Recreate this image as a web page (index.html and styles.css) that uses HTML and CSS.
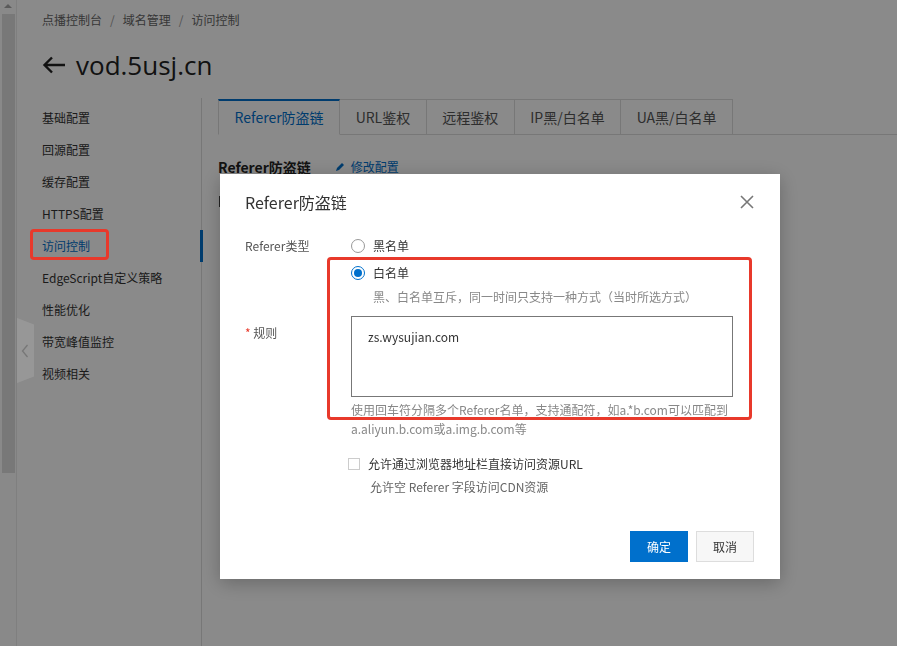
FILE: index.html
```html
<!DOCTYPE html>
<html lang="zh-CN">
<head>
<meta charset="utf-8">
<title>访问控制</title>
<link rel="stylesheet" href="styles.css">
</head>
<body>
<div class="app">
  <div class="scrollbar"><div class="sb-arrow"></div><div class="sb-thumb"></div></div>
  <div class="page">
    <div class="breadcrumb"><span>点播控制台</span><span class="sep">/</span><span>域名管理</span><span class="sep">/</span><span>访问控制</span></div>
    <div class="title">
      <svg class="back" width="24" height="18" viewBox="0 0 24 18"><path d="M23 9H2.5M10 1.5L2.5 9l7.5 7.5" fill="none" stroke="#222" stroke-width="2.4"/></svg>
      <span>vod.5usj.cn</span>
    </div>
    <div class="layout">
      <nav class="sidenav">
        <div class="nav-item">基础配置</div>
        <div class="nav-item">回源配置</div>
        <div class="nav-item">缓存配置</div>
        <div class="nav-item">HTTPS配置</div>
        <div class="nav-item active">访问控制<span class="mark-box"></span></div>
        <div class="nav-item">EdgeScript自定义策略</div>
        <div class="nav-item">性能优化</div>
        <div class="nav-item">带宽峰值监控</div>
        <div class="nav-item">视频相关</div>
      </nav>
      <main class="content">
        <div class="tabs">
          <div class="tab active">Referer防盗链</div>
          <div class="tab">URL鉴权</div>
          <div class="tab">远程鉴权</div>
          <div class="tab">IP黑/白名单</div>
          <div class="tab">UA黑/白名单</div>
        </div>
        <div class="section-head">
          <span class="section-title">Referer防盗链</span>
          <span class="edit"><svg width="10" height="10" viewBox="0 0 10 10"><path d="M1 9l1-3 5-5 2 2-5 5z" fill="#0070cc"/></svg>修改配置</span>
        </div>
        <div class="section-row"><span class="row-stub"></span></div>
      </main>
    </div>
    <div class="collapse-handle"><svg width="8" height="14" viewBox="0 0 8 14"><path d="M6.5 1L1.5 7l5 6" fill="none" stroke="#777" stroke-width="1.3"/></svg></div>
  </div>
</div>
<div class="mask"></div>
<div class="dialog">
  <div class="dialog-head">
    <span class="dialog-title">Referer防盗链</span>
    <svg class="close" width="14" height="14" viewBox="0 0 14 14"><path d="M1 1l12 12M13 1L1 13" stroke="#777" stroke-width="1.6" fill="none"/></svg>
  </div>
  <div class="form">
    <div class="form-row">
      <div class="label">Referer类型</div>
      <div class="control">
        <label class="radio"><span class="radio-dot"></span>黑名单</label>
        <label class="radio checked"><span class="radio-dot"></span>白名单</label>
        <div class="help radio-help">黑、白名单互斥，同一时间只支持一种方式（当时所选方式）</div>
      </div>
    </div>
    <div class="form-row rule-row">
      <div class="label"><span class="req">*</span> 规则</div>
      <div class="control">
        <div class="textarea">zs.wysujian.com</div>
        <div class="help">使用回车符分隔多个Referer名单，支持通配符，如a.*b.com可以匹配到<br>a.aliyun.b.com或a.img.b.com等</div>
      </div>
    </div>
    <div class="check-row">
      <label class="checkbox"><span class="box"></span>允许通过浏览器地址栏直接访问资源URL</label>
      <div class="check-sub">允许空 Referer 字段访问CDN资源</div>
    </div>
  </div>
  <div class="dialog-foot">
    <button class="btn primary">确定</button>
    <button class="btn">取消</button>
  </div>
  <span class="mark-box dialog-mark"></span>
</div>
</body>
</html>
```

FILE: styles.css
```css
* { box-sizing: border-box; margin: 0; padding: 0; }
html, body { height: 100%; }
body {
  font-family: "Noto Sans CJK SC", "Open Sans", sans-serif;
  font-size: 12px;
  line-height: 1.5;
  color: #333;
  background: #fff;
  overflow: hidden;
}
.app { display: flex; height: 646px; }

.scrollbar {
  width: 17px; flex: none; background: #fdfdfd; border-right: 1px solid #eaeaea;
  display: flex; flex-direction: column; align-items: center; padding-top: 4px;
}
.sb-arrow { width: 0; height: 0; border-left: 4px solid transparent; border-right: 4px solid transparent; border-bottom: 4px solid #a8a8a8; }
.sb-thumb { width: 13px; height: 459px; margin-top: 6px; background: #dedede; }

.page { flex: 1; position: relative; display: flex; flex-direction: column; }
.breadcrumb { padding: 12px 0 0 25px; line-height: 16px; height: 28px; color: #666; display: flex; }
.breadcrumb .sep { margin: 0 8px; color: #999; }
.title {
  display: flex; align-items: center; gap: 10px; padding-left: 25px; margin-top: 21px; height: 32px;
  font-family: "Open Sans", "Noto Sans CJK SC", sans-serif; font-size: 26px; color: #222;
}
.title .back { flex: none; }

.layout { display: flex; flex: 1; margin-top: 17px; }
.sidenav { width: 185px; flex: none; border-right: 1px solid #ddd; padding-top: 4px; }
.nav-item { position: relative; height: 32px; line-height: 32px; padding-left: 25px; color: #333; }
.nav-item.active { color: #0070cc; }
.nav-item.active::after { content: ""; position: absolute; right: -2px; top: 0; bottom: 0; width: 3px; background: #0070cc; }
.mark-box { position: absolute; z-index: 30; border: 3px solid #e8392b; border-radius: 4px; }
.nav-item .mark-box { left: 13px; top: -1px; width: 79px; height: 31px; }

.content { flex: 1; padding-left: 16px; padding-top: 1px; }
.tabs { display: flex; border-bottom: 1px solid #ddd; height: 36px; }
.tab { height: 36px; line-height: 34px; padding: 0 15.5px; border: 1px solid #ddd; border-left: none; font-size: 14px; color: #555; background: #fff; }
.tab:first-child { border-left: 1px solid #ddd; }
.tab.active { color: #0070cc; border-top: 2px solid #0070cc; border-bottom-color: #fff; line-height: 33px; }

.section-head { display: flex; align-items: center; margin-top: 22px; height: 20px; }
.section-title { font-size: 14px; font-weight: bold; color: #222; }
.edit { margin-left: 24px; color: #0070cc; display: flex; align-items: center; gap: 6px; }
.section-row { margin-top: 19px; display: flex; padding-left: 1px; }
.row-stub { width: 3px; height: 11px; background: #444; }

.collapse-handle {
  position: absolute; z-index: 30; left: 0; top: 318px; width: 17px; height: 65px;
  background: #979797; clip-path: polygon(0 0, 100% 10%, 100% 90%, 0 100%);
  display: flex; align-items: center; padding-left: 4px;
}

.mask { position: fixed; inset: 0; background: rgba(0, 0, 0, 0.46); z-index: 10; }

.dialog {
  position: fixed; z-index: 20; left: 220px; top: 174px; width: 560px; height: 405px;
  background: #fff; box-shadow: 0 4px 18px rgba(0, 0, 0, 0.25);
  display: flex; flex-direction: column;
}
.dialog-head { display: flex; align-items: center; justify-content: space-between; height: 56px; padding: 0 26px 0 25px; }
.dialog-title { font-size: 16px; color: #333; }
.form { padding-left: 25px; flex: 1; }
.form-row { display: flex; }
.label { width: 106px; flex: none; color: #555; line-height: 18px; }
.control { flex: 1; }
.req { color: #e8392b; }
.radio { display: flex; align-items: center; height: 18px; line-height: 18px; color: #333; margin-bottom: 9px; }
.radio-dot { width: 14px; height: 14px; border: 1px solid #999; border-radius: 50%; margin-right: 8px; position: relative; }
.radio.checked .radio-dot { border-color: #0070cc; }
.radio.checked .radio-dot::after { content: ""; position: absolute; left: 2px; top: 2px; width: 8px; height: 8px; border-radius: 50%; background: #0070cc; }
.help { color: #888; line-height: 19px; }
.radio-help { padding-left: 22px; margin-top: -4px; }
.form-row:first-child { margin-top: 7px; }
.rule-row { margin-top: 10px; }
.rule-row .label { padding-top: 8px; }
.textarea { width: 382px; height: 81px; border: 1px solid #777; padding: 11px 16px; color: #333; line-height: 18px; margin-bottom: 3px; }
.check-row { padding-left: 103px; margin-top: 17px; }
.checkbox { display: flex; align-items: center; height: 18px; line-height: 18px; color: #333; }
.box { width: 12px; height: 12px; border: 1px solid #ccc; margin-right: 8px; }
.check-sub { padding-left: 22px; margin-top: 5px; color: #666; line-height: 18px; }
.dialog-foot { display: flex; justify-content: flex-end; gap: 8px; padding: 0 26px 17px 0; }
.btn { height: 31px; padding: 0 16px; border: 1px solid #ddd; background: #f7f7f7; color: #333; font-family: inherit; font-size: 12px; }
.btn.primary { background: #0070cc; border-color: #0070cc; color: #fff; width: 58px; }
.dialog-mark { left: 107px; top: 83px; width: 425px; height: 163px; }
```
